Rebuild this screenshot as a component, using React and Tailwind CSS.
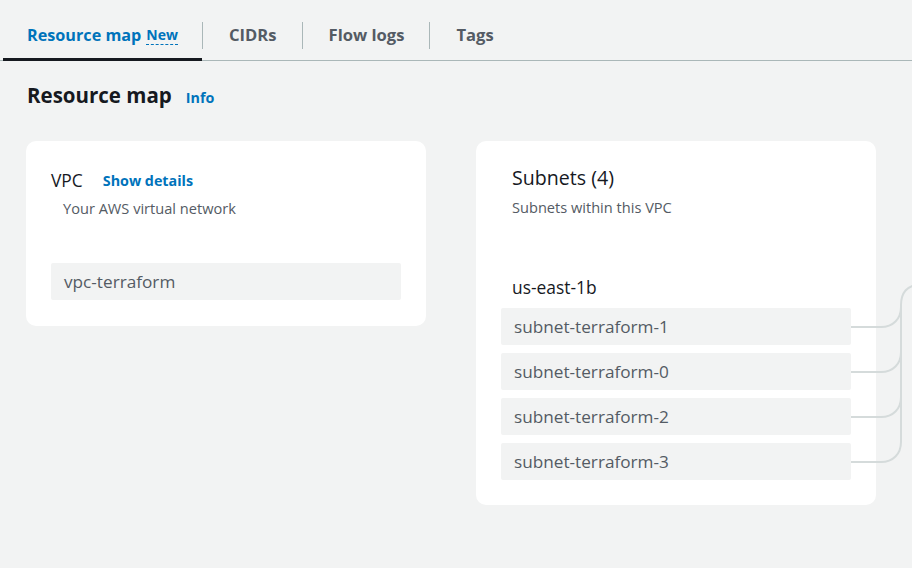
import React from 'react';

const tabs = [
  { label: 'CIDRs' },
  { label: 'Flow logs' },
  { label: 'Tags' },
];

const subnets = ['subnet-terraform-1', 'subnet-terraform-0', 'subnet-terraform-2', 'subnet-terraform-3'];

const Connectors = () => {
  const rows = [327, 372, 417, 462];
  return (
    <svg className="absolute left-0 top-0 pointer-events-none" width="912" height="568" viewBox="0 0 912 568" fill="none">
      {rows.map((y) => (
        <path key={y} d={`M851 ${y} H881 C893 ${y} 901 ${y - 8} 901 ${y - 20}`} stroke="#d5dbdb" strokeWidth="2" />
      ))}
      <path d="M901 442 V305 C901 293 907 285 919 285" stroke="#d5dbdb" strokeWidth="2" />
    </svg>
  );
};

export default function App() {
  return (
    <div className="relative w-[912px] h-[568px] overflow-hidden bg-[#f2f3f3] text-[#16191f]" style={{ fontFamily: '"Open Sans", "Noto Sans", sans-serif' }}>
      {/* tabs */}
      <div className="flex h-[61px] pt-[10px] border-b border-[#aab7b8] pl-[3px]">
        <div className="relative flex items-center h-full pl-[24px] pr-[24px]">
          <span className="text-[16.2px] font-bold text-[#0073bb]">Resource map</span>
          <span className="ml-[5px] text-[14px] font-bold text-[#0073bb] border-b border-dashed border-[#0073bb] leading-[18px]">New</span>
          <div className="absolute left-0 right-0 bottom-[-1px] h-[3px] bg-[#16191f]" />
        </div>
        {tabs.map((t) => (
          <div key={t.label} className="flex items-center h-full">
            <div className="w-px h-[27px] bg-[#aab7b8]" />
            <span className="pl-[26px] pr-[25px] text-[16.6px] font-bold text-[#545b64]">{t.label}</span>
          </div>
        ))}
      </div>

      {/* heading */}
      <div className="flex items-baseline pl-[27px] mt-[20px] h-[28px]">
        <h2 className="text-[20.5px] font-bold leading-[28px]">Resource map</h2>
        <span className="ml-[14px] text-[14.3px] font-bold text-[#0073bb]">Info</span>
      </div>

      {/* cards */}
      <div className="flex gap-[50px] pl-[26px] mt-[32px] items-start">
        <div className="w-[400px] bg-white rounded-[10px] px-[25px] pt-[27px] pb-[26px]">
          <div className="flex items-center h-[24px] pt-[1px]">
            <span className="text-[17.4px]">VPC</span>
            <span className="ml-[20px] text-[14.3px] font-bold text-[#0073bb]">Show details</span>
          </div>
          <div className="mt-[6px] pl-[12px] text-[14.6px] leading-[20px] text-[#545b64]">Your AWS virtual network</div>
          <div className="mt-[45px] h-[37px] flex items-center pl-[13px] bg-[#f2f3f3] rounded-[2px] text-[17.2px] text-[#545b64]">vpc-terraform</div>
        </div>

        <div className="w-[400px] bg-white rounded-[10px] px-[25px] pt-[24px] pb-[25px]">
          <div className="pl-[11px] text-[19.6px] leading-[26px]">Subnets (4)</div>
          <div className="pl-[11px] mt-[6px] text-[14.6px] leading-[20px] text-[#545b64]">Subnets within this VPC</div>
          <div className="pl-[11px] mt-[58px] text-[17.4px] leading-[24px]">us-east-1b</div>
          <div className="mt-[9px] flex flex-col gap-[8px]">
            {subnets.map((s) => (
              <div key={s} className="h-[37px] flex items-center pl-[13px] bg-[#f2f3f3] rounded-[2px] text-[17.2px] text-[#545b64]">{s}</div>
            ))}
          </div>
        </div>
      </div>

      <Connectors />
    </div>
  );
}
